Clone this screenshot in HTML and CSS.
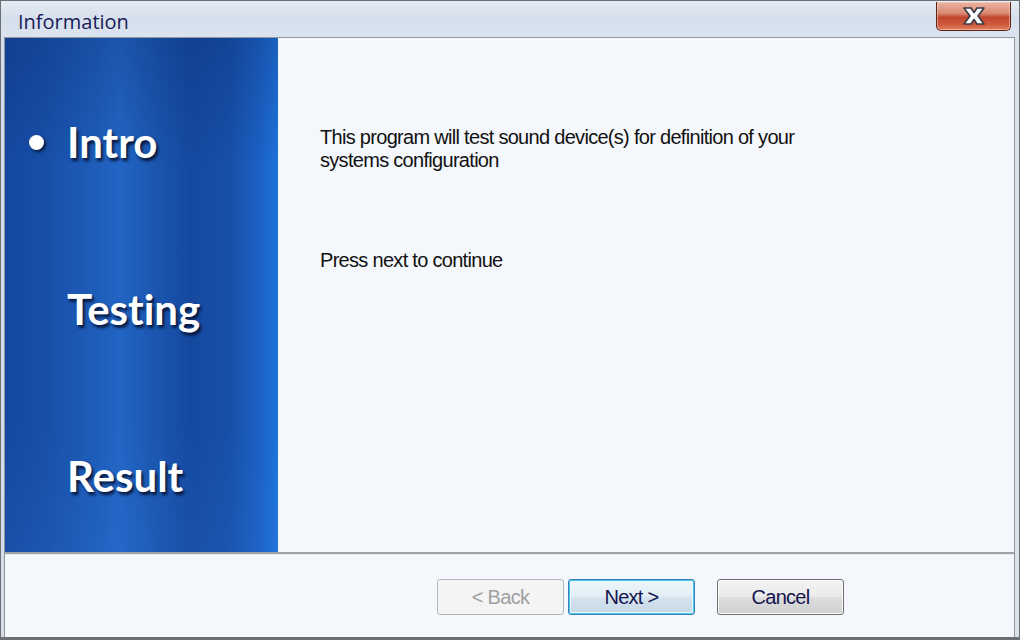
FILE: index.html
```html
<!DOCTYPE html>
<html lang="en">
<head>
    <meta charset="UTF-8">
    <title>Information</title>
    <link rel="stylesheet" href="styles.css">
</head>
<body>
    <div class="window">
        <div class="titlebar">
            <span class="title">Information</span>
            <div class="close-btn">
                <svg width="34" height="20" viewBox="0 0 34 20">
                    <path d="M7 2 H14 L17 6.5 L20 2 H27 L21 10 L27 18 H20 L17 13.5 L14 18 H7 L13 10 Z" fill="#fff" stroke="#3a3a46" stroke-width="1.6" stroke-linejoin="round"/>
                </svg>
            </div>
        </div>
        <div class="frame">
            <div class="main">
                <div class="sidebar">
                    <div class="step active"><span class="marker"><span class="dot"></span></span>Intro</div>
                    <div class="step"><span class="marker"></span>Testing</div>
                    <div class="step"><span class="marker"></span>Result</div>
                </div>
                <div class="content">
                    <p class="intro-text">This program will test sound device(s) for definition of your<br>systems configuration</p>
                    <p class="hint">Press next to continue</p>
                </div>
            </div>
            <div class="footer">
                <button class="btn disabled">&lt; Back</button>
                <button class="btn focused">Next &gt;</button>
                <button class="btn cancel">Cancel</button>
            </div>
        </div>
    </div>
</body>
</html>
```

FILE: styles.css
```css
html, body {
    margin: 0;
    padding: 0;
}
body {
    width: 1020px;
    height: 640px;
    overflow: hidden;
    background-color: #dbe4ee;
}
.window {
    box-sizing: border-box;
    width: 1020px;
    height: 640px;
    display: flex;
    flex-direction: column;
    border: 1px solid #6c6f74;
    border-bottom-width: 3px;
    background: linear-gradient(to right, #d4deea 0%, #dde6f0 40%, #e3eaf2 60%, #d8e2ed 100%);
}
.titlebar {
    height: 36px;
    display: flex;
    justify-content: space-between;
    align-items: flex-start;
    padding: 0 8px 0 17px;
    background: linear-gradient(to bottom, #e4ebf3 0%, #d6e0ec 45%, #dae3ee 100%);
}
.title {
    font-family: "Open Sans", sans-serif;
    font-size: 20px;
    line-height: 20px;
    padding-top: 11px;
    color: #1a1a58;
}
.close-btn {
    width: 73px;
    height: 28px;
    margin-top: 1px;
    display: flex;
    align-items: center;
    justify-content: center;
    border: 1px solid #5a2418;
    border-top: none;
    border-radius: 0 0 5px 5px;
    background: linear-gradient(to bottom, #eab4a4 0%, #d98a72 40%, #c0452c 55%, #cf5a3e 80%, #e08060 100%);
    box-shadow: inset 0 0 0 1px rgba(255, 220, 200, 0.5);
}
.close-btn svg {
    display: block;
}
.frame {
    flex: 1;
    display: flex;
    flex-direction: column;
    margin: 0 4px 0 3px;
    border: 1px solid #8f969e;
    border-bottom: none;
    background-color: #f4f7fb;
}
.main {
    height: 514px;
    display: flex;
    border-bottom: 2px solid #9fa3a8;
}
.sidebar {
    width: 273px;
    box-sizing: border-box;
    padding-top: 79px;
    display: flex;
    flex-direction: column;
    gap: 117px;
    background:
        linear-gradient(to bottom, rgba(8, 30, 90, 0.22) 0%, rgba(0, 0, 0, 0) 25%, rgba(0, 0, 0, 0) 75%, rgba(50, 120, 220, 0.15) 100%),
        linear-gradient(to right, #1548a0 0%, #184fa8 15%, #1d5cb8 32%, #2265c4 42%, #1a55ae 56%, #1549a0 68%, #174fa8 82%, #1b62c6 94%, #1f74dc 100%);
}
.step {
    display: flex;
    align-items: center;
    height: 50px;
    font-family: Lato, "Open Sans", sans-serif;
    font-weight: 700;
    font-size: 42px;
    line-height: 50px;
    font-variant-ligatures: none;
    color: #ffffff;
    text-shadow: 2px 3px 3px rgba(4, 12, 40, 0.85);
}
.marker {
    width: 62px;
    display: flex;
    justify-content: flex-start;
    padding-left: 24px;
    box-sizing: border-box;
}
.dot {
    width: 15px;
    height: 15px;
    border-radius: 50%;
    background-color: #ffffff;
    box-shadow: 2px 2px 3px rgba(4, 12, 40, 0.8);
}
.content {
    flex: 1;
    padding: 88px 0 0 42px;
    font-family: "Liberation Sans", Arial, sans-serif;
    font-size: 20px;
    letter-spacing: -0.7px;
    color: #111111;
}
.content p {
    margin: 0;
    line-height: 23px;
}
.intro-text {
    margin-bottom: 77px !important;
}
.footer {
    flex: 1;
    display: flex;
    align-items: flex-start;
    padding: 24px 0 0 432px;
    border-top: 1px solid #e6eaee;
}
.btn {
    width: 127px;
    height: 36px;
    margin: 0;
    font-family: "Liberation Sans", Arial, sans-serif;
    font-size: 20px;
    letter-spacing: -0.7px;
    color: #15154f;
    border: 1px solid #707070;
    border-radius: 3px;
    background: linear-gradient(to bottom, #f3f3f3 0%, #ebebeb 48%, #dddddd 52%, #cfcfcf 100%);
    box-shadow: inset 0 0 0 1px #fbfbfb;
}
.btn.disabled {
    color: #a0a0a0;
    border-color: #b5b9bd;
    background: #f4f4f4;
    box-shadow: none;
}
.btn.focused {
    margin-left: 4px;
    border-color: #3c7fb1;
    box-shadow: inset 0 0 0 1px #48c6f4, inset 0 0 0 2px #e6f6fc;
    background: linear-gradient(to bottom, #eef6fa 0%, #e2eef6 48%, #d4e3ee 52%, #c6d8e6 100%);
}
.btn.cancel {
    margin-left: 22px;
}
```
